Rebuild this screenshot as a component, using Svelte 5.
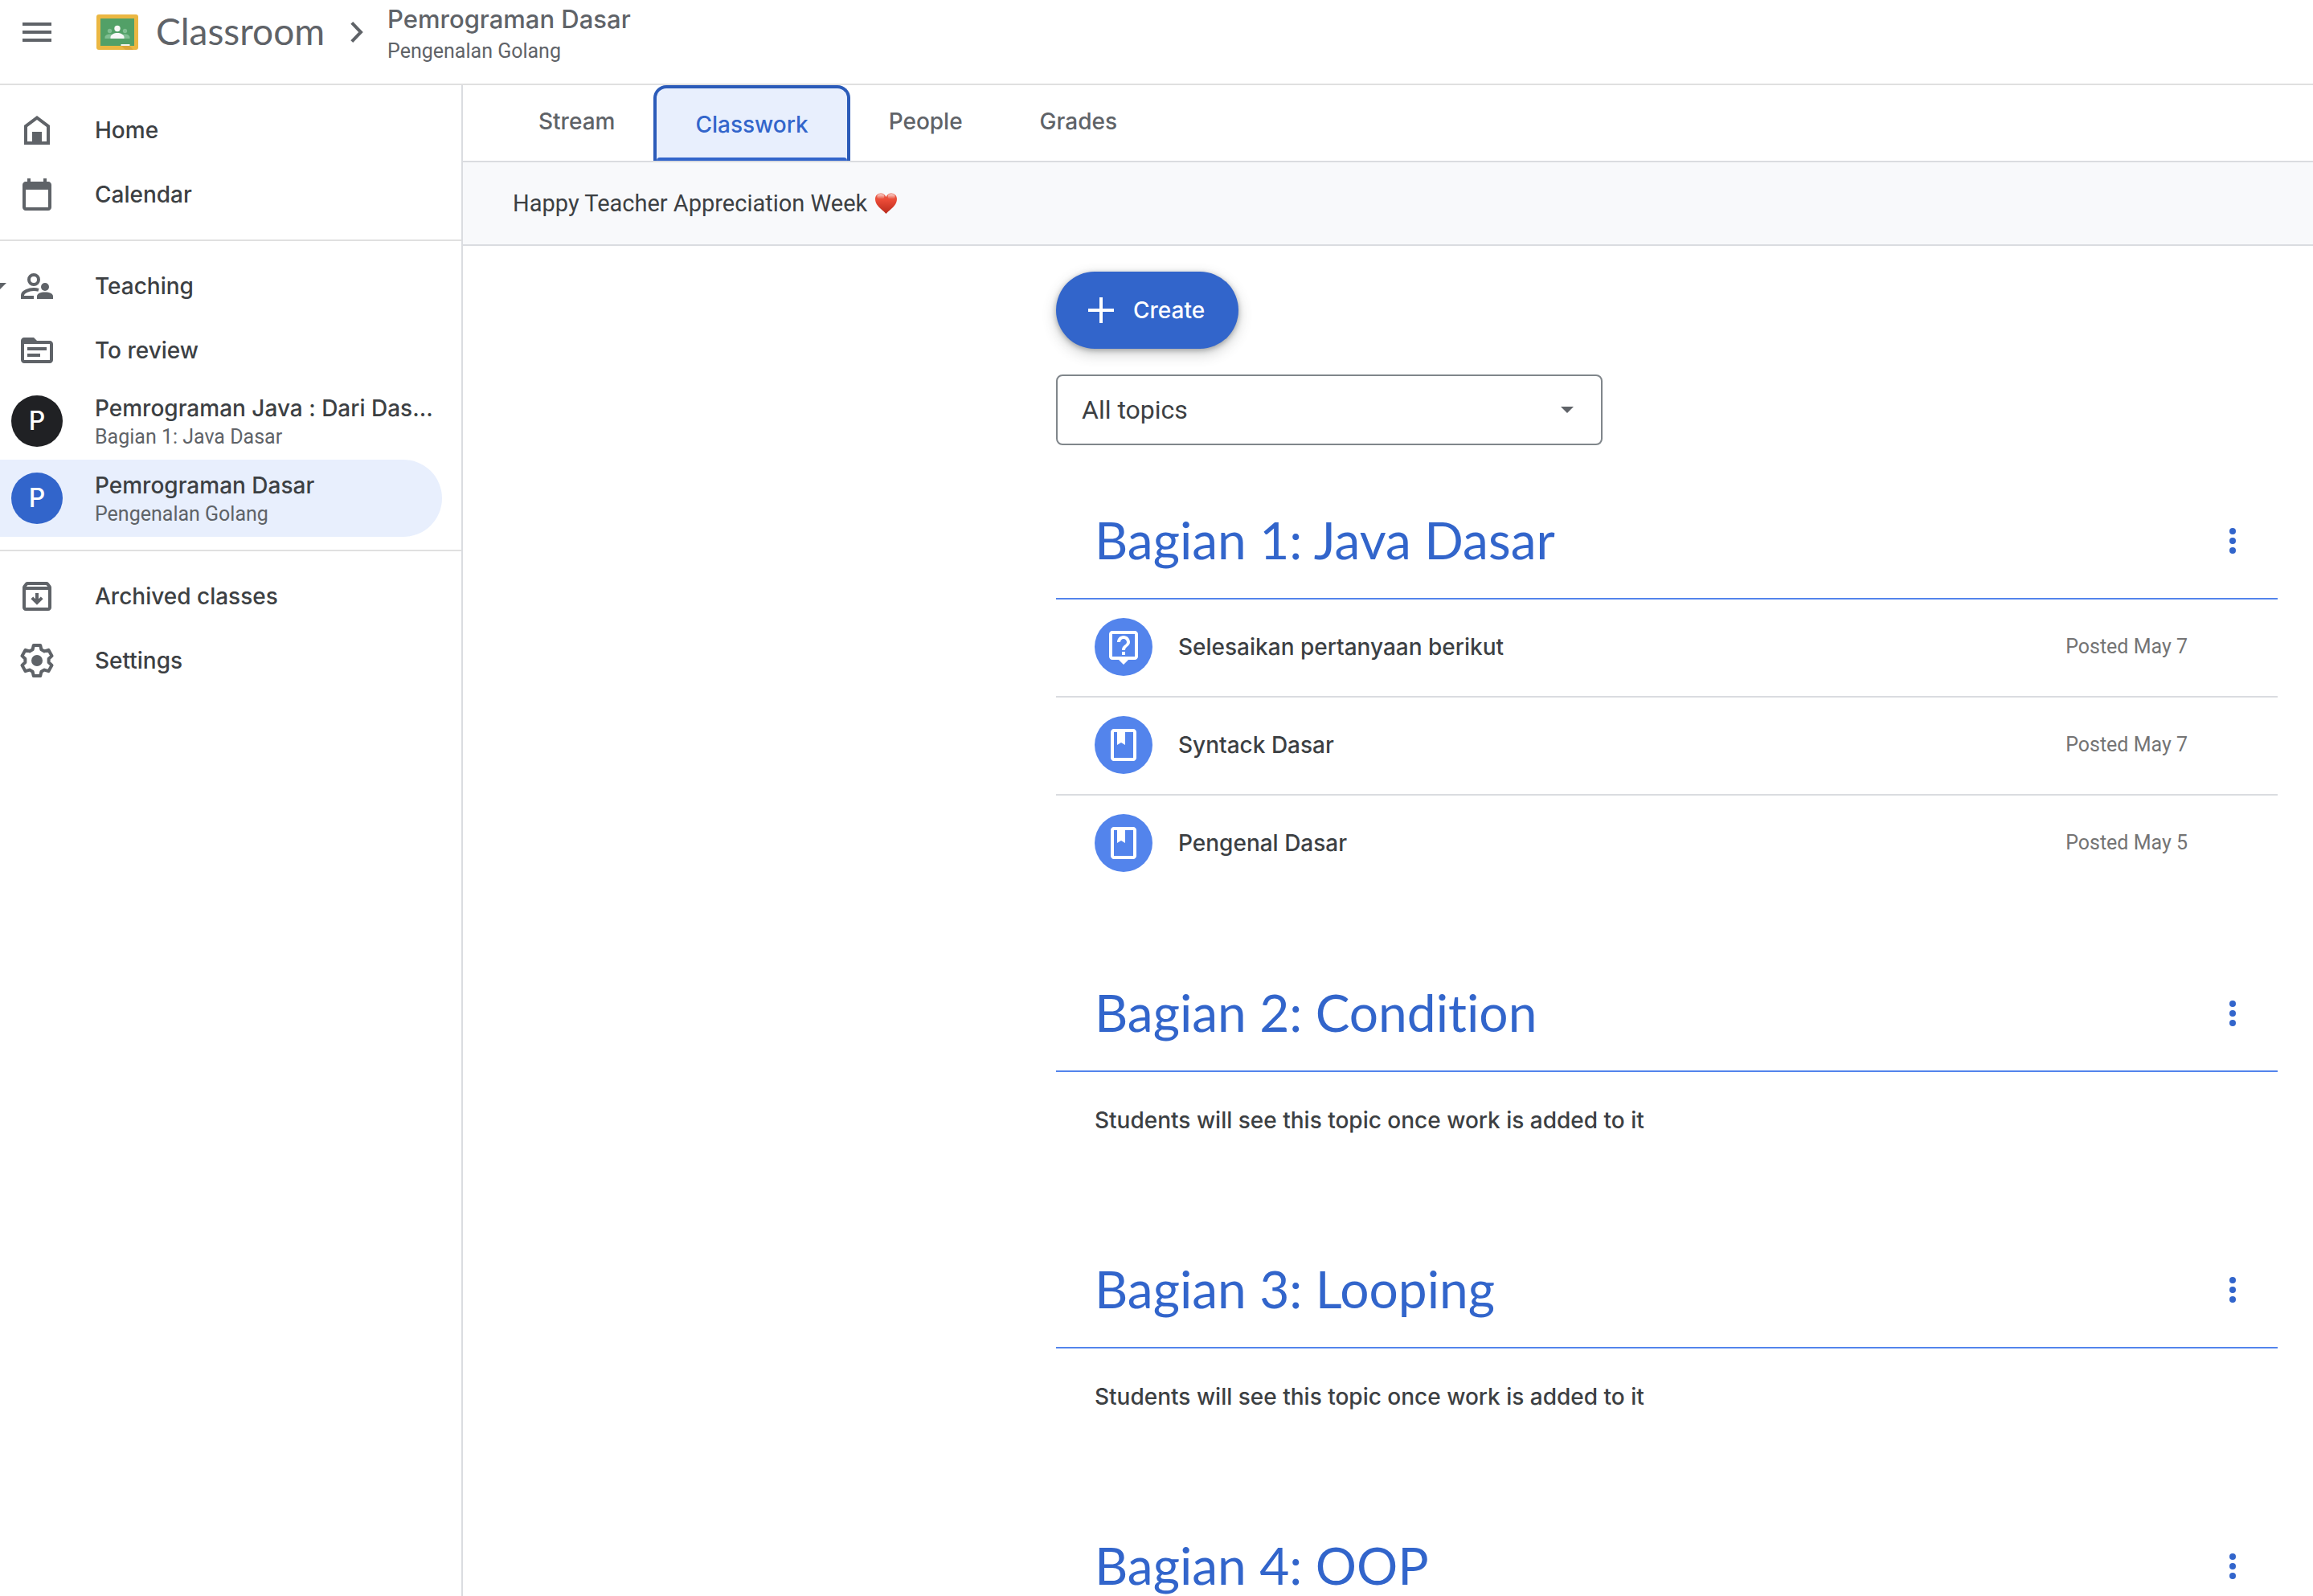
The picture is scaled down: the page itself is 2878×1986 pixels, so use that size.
<script>
  const icons = {
    home: 'M4 21V9l8-6 8 6v12H4zM6 19h3v-6h6v6h3v-9l-6-4.5L6 10v9z',
    calendar:
      'M19 4h-1V2h-2v2H8V2H6v2H5c-1.1 0-2 .9-2 2v14c0 1.1.9 2 2 2h14c1.1 0 2-.9 2-2V6c0-1.1-.9-2-2-2zm0 16H5V9h14v11z',
    review:
      'M20 6h-8l-2-2H4c-1.1 0-2 .9-2 2v12c0 1.1.9 2 2 2h16c1.1 0 2-.9 2-2V8c0-1.1-.9-2-2-2zm0 12H4V8h16v10zM6 10h12v2H6zM6 14h8v2H6z',
    archive:
      'M20.54 5.23l-1.39-1.68C18.88 3.21 18.47 3 18 3H6c-.47 0-.88.21-1.16.55L3.46 5.23C3.17 5.57 3 6.02 3 6.5V19c0 1.1.9 2 2 2h14c1.1 0 2-.9 2-2V6.5c0-.48-.17-.93-.46-1.27zM6.24 5h11.52l.83 1H5.42l.82-1zM5 19V8h14v11H5zM12 17.4l3.8-3.8-1.4-1.4-1.4 1.4V10h-2v3.6l-1.4-1.4-1.4 1.4z',
    question:
      'M19 2H5c-1.1 0-2 .9-2 2v14c0 1.1.9 2 2 2h4l3 3 3-3h4c1.1 0 2-.9 2-2V4c0-1.1-.9-2-2-2zm0 16H5V4h14v14zM11 15h2v2h-2zM12 7c1.1 0 2 .9 2 2 0 2-3 1.75-3 5h2c0-2.25 3-2.5 3-5 0-2.21-1.79-4-4-4s-4 1.79-4 4h2c0-1.1.9-2 2-2z',
    material:
      'M18 2H6c-1.1 0-2 .9-2 2v16c0 1.1.9 2 2 2h12c1.1 0 2-.9 2-2V4c0-1.1-.9-2-2-2zm0 18H6V4h2v8l2.5-1.5L13 12V4h5v16z'
  };

  // Six-toothed gear outline: one tooth profile turned by 60 degrees at a time.
  const tooth = [[-2.7, -6.9], [-2.1, -9.5], [2.1, -9.5], [2.7, -6.9]];
  const gear = Array.from({ length: 6 }, (_, i) => (i * Math.PI) / 3)
    .flatMap((a) =>
      tooth.map(([x, y]) => [
        (12 + x * Math.cos(a) - y * Math.sin(a)).toFixed(2),
        (12 + x * Math.sin(a) + y * Math.cos(a)).toFixed(2)
      ].join(' '))
    )
    .join('L');

  const tabs = ['Stream', 'Classwork', 'People', 'Grades'];
  let active = $state('Classwork');

  const classes = [
    { name: 'Pemrograman Java : Dari Das…', section: 'Bagian 1: Java Dasar', tone: 'black', current: false },
    { name: 'Pemrograman Dasar', section: 'Pengenalan Golang', tone: 'blue', current: true }
  ];

  const topics = [
    {
      title: 'Bagian 1: Java Dasar',
      work: [
        { title: 'Selesaikan pertanyaan berikut', icon: 'question', date: 'Posted May 7' },
        { title: 'Syntack Dasar', icon: 'material', date: 'Posted May 7' },
        { title: 'Pengenal Dasar', icon: 'material', date: 'Posted May 5' }
      ]
    },
    { title: 'Bagian 2: Condition', work: [] },
    { title: 'Bagian 3: Looping', work: [] },
    { title: 'Bagian 4: OOP', work: [] }
  ];
</script>

{#snippet icon(name)}
  <svg class="icon" viewBox="0 0 24 24" aria-hidden="true"><path fill-rule="evenodd" d={icons[name]} /></svg>
{/snippet}

<div class="app">
  <header>
    <button class="menu" aria-label="Main menu">
      <svg class="icon" viewBox="0 0 24 24" aria-hidden="true"><path d="M3 6h18v2H3zM3 11h18v2H3zM3 16h18v2H3z" /></svg>
    </button>
    <a class="brand" href="#home">
      <svg class="logo" viewBox="0 0 52 44" aria-hidden="true">
        <rect width="52" height="44" rx="3" fill="#ebb742" />
        <rect x="5" y="5" width="42" height="34" fill="#52a067" />
        <path d="M31 39h10l5 5H36z" fill="#dda63a" />
        <rect x="30.500" y="37" width="11" height="2" fill="#f4f4f2" />
        <g fill="#80be92">
          <circle cx="16.500" cy="20.500" r="2.700" />
          <circle cx="35.500" cy="20.500" r="2.700" />
          <path d="M10.500 30v-1.500c0-2.500 3-4 6-4s6 1.500 6 4V30zM29.500 30v-1.500c0-2.500 3-4 6-4s6 1.500 6 4V30z" />
        </g>
        <circle cx="26" cy="17.500" r="3.700" fill="#f7f7f7" />
        <path d="M17.500 30v-1.500c0-3.500 4.500-5.500 8.500-5.500s8.500 2 8.500 5.500V30z" fill="#f7f7f7" />
      </svg>
      <span>Classroom</span>
    </a>
    <svg class="icon chevron" viewBox="0 0 24 24" aria-hidden="true"><path d="M9.400 6.200L15 12l-5.600 5.800" /></svg>
    <a class="crumb" href="#class">
      <span class="crumb-title">Pemrograman Dasar</span>
      <span class="section">Pengenalan Golang</span>
    </a>
  </header>

  <div class="body">
    <nav class="sidebar" aria-label="Main">
      <div class="group">
        <a class="item" href="#home">{@render icon('home')}Home</a>
        <a class="item" href="#calendar">{@render icon('calendar')}Calendar</a>
      </div>
      <div class="group">
        <a class="item teaching" href="#teaching">
          <svg class="icon expand" viewBox="0 0 24 24" aria-hidden="true"><path d="M7 10l5 5 5-5z" /></svg>
          <svg class="icon" viewBox="0 0 24 24" aria-hidden="true">
            <g fill="none" stroke="currentColor" stroke-width="2">
              <circle cx="10" cy="8" r="3" />
              <path d="M10 19H3v-1.400C3 15.600 7 14 10 14c1 0 2 .1 3 .4" />
            </g>
            <circle cx="17" cy="12.500" r="2.500" />
            <path d="M12 20v-1.700c0-1.700 2.300-2.600 5-2.600s5 .9 5 2.600V20z" />
          </svg>
          Teaching
        </a>
        <a class="item" href="#review">{@render icon('review')}To review</a>
        {#each classes as c}
          <a class="item course" class:current={c.current} href="#course" aria-current={c.current ? 'page' : undefined}>
            <span class="avatar {c.tone}" aria-hidden="true">P</span>
            <span class="names">
              <span class="name">{c.name}</span>
              <span class="section">{c.section}</span>
            </span>
          </a>
        {/each}
      </div>
      <div class="group">
        <a class="item" href="#archived">{@render icon('archive')}Archived classes</a>
        <a class="item" href="#settings">
          <svg class="icon" viewBox="0 0 24 24" aria-hidden="true">
            <path d="M{gear}z" fill="none" stroke="currentColor" stroke-width="2" stroke-linejoin="round" />
            <circle cx="12" cy="12" r="3.500" />
          </svg>
          Settings
        </a>
      </div>
    </nav>

    <main>
      <div class="tabs" role="tablist">
        {#each tabs as t}
          <button class="tab" role="tab" aria-selected={active === t} onclick={() => (active = t)}>{t}</button>
        {/each}
      </div>

      <p class="banner">
        Happy Teacher Appreciation Week
        <svg class="heart" viewBox="0 0 27 26" role="img" aria-label="heart">
          <defs>
            <linearGradient id="heart-fill" x1="0" y1="0" x2="0" y2="1">
              <stop offset="0" stop-color="#e9604a" />
              <stop offset="0.350" stop-color="#ea4a36" />
              <stop offset="1" stop-color="#b82a1c" />
            </linearGradient>
            <linearGradient id="heart-shine" x1="0" y1="0" x2="0" y2="1">
              <stop offset="0" stop-color="#fff" stop-opacity="0.750" />
              <stop offset="1" stop-color="#fff" stop-opacity="0" />
            </linearGradient>
          </defs>
          <path d="M13.500 26C9.500 21 0 16.500 0 7.700 0 3.400 3 .4 6.900.4c3 0 5.400 1.800 6.600 4.700C14.700 2.200 17.100.4 20.100.4 24 .4 27 3.400 27 7.700 27 16.500 17.500 21 13.500 26z" fill="url(#heart-fill)" />
          <ellipse cx="6.800" cy="4.500" rx="4.500" ry="3.300" fill="url(#heart-shine)" />
          <ellipse cx="20.200" cy="4.500" rx="4.500" ry="3.300" fill="url(#heart-shine)" />
        </svg>
      </p>

      <div class="content">
        <button class="create">
          <svg viewBox="0 0 32 32" aria-hidden="true"><path d="M14 0h4v14h14v4H18v14h-4V18H0v-4h14z" /></svg>
          Create
        </button>

        <div class="filter">
          <select aria-label="Topic filter">
            <option>All topics</option>
            {#each topics as topic}<option>{topic.title}</option>{/each}
          </select>
          <svg class="arrow" viewBox="0 0 16 8" aria-hidden="true"><path d="M0 0h16L8 8z" /></svg>
        </div>

        {#each topics as topic}
          <section>
            <div class="topic">
              <h2>{topic.title}</h2>
              <button class="more" aria-label="Options for {topic.title}">
                <svg class="icon" viewBox="0 0 24 24" aria-hidden="true">
                  <circle cx="12" cy="6" r="2" /><circle cx="12" cy="12" r="2" /><circle cx="12" cy="18" r="2" />
                </svg>
              </button>
            </div>
            {#if topic.work.length}
              <ul>
                {#each topic.work as w}
                  <li>
                    <span class="badge">{@render icon(w.icon)}</span>
                    <span class="work-title">{w.title}</span>
                    <span class="date">{w.date}</span>
                  </li>
                {/each}
              </ul>
            {:else}
              <p class="empty">Students will see this topic once work is added to it</p>
            {/if}
          </section>
        {/each}
      </div>
    </main>
  </div>
</div>

<style>
  :global(body) {
    background: #fff;
  }
  * {
    box-sizing: border-box;
  }
  .app {
    display: flex;
    flex-direction: column;
    height: 100vh;
    overflow: hidden;
    color: #3c4043;
    font: 500 28px/40px Inter, sans-serif;
    font-variant-ligatures: none;
  }
  a {
    color: inherit;
    text-decoration: none;
  }
  button {
    padding: 0;
    border: 0;
    background: none;
    color: inherit;
    font: inherit;
    cursor: pointer;
  }
  .icon {
    flex: none;
    display: block;
    width: 48px;
    height: 48px;
    fill: currentColor;
  }

  header {
    flex: none;
    display: flex;
    align-items: flex-start;
    height: 106px;
    padding-left: 22px;
    border-bottom: 2px solid #e0e0e0;
    color: #5f6368;
  }
  .menu,
  .brand,
  .chevron {
    display: flex;
    align-items: center;
    height: 80px;
  }
  .brand {
    gap: 22px;
    margin-left: 50px;
    font: 400 46px/76px Lato, sans-serif;
  }
  .brand span {
    padding-bottom: 2px;
  }
  .logo {
    width: 52px;
    height: 44px;
  }
  .chevron {
    margin: 0 15px;
    fill: none;
    stroke: currentColor;
    stroke-width: 2;
  }
  .crumb {
    display: flex;
    flex-direction: column;
    padding-top: 4px;
  }
  .crumb-title {
    font-size: 31px;
  }
  .section {
    color: #5f6368;
    font: 400 25px/32px Roboto, sans-serif;
  }
  .crumb .section {
    line-height: 40px;
  }

  .body {
    flex: 1;
    display: flex;
    min-height: 0;
  }
  .sidebar {
    flex: none;
    width: 576px;
    border-right: 2px solid #dadce0;
  }
  .group {
    padding: 16px 0;
  }
  .group + .group {
    border-top: 2px solid #e0e0e0;
  }
  .item {
    display: flex;
    align-items: center;
    gap: 48px;
    height: 80px;
    margin-right: 24px;
    padding-left: 22px;
    white-space: nowrap;
  }
  .item .icon {
    color: #5f6368;
  }
  .teaching {
    position: relative;
  }
  .expand {
    position: absolute;
    left: -26px;
  }
  .course {
    gap: 40px;
    height: 96px;
    padding-left: 14px;
    border-radius: 0 48px 48px 0;
  }
  .current {
    background: #e8effd;
  }
  .avatar {
    flex: none;
    width: 64px;
    border-radius: 50%;
    color: #fff;
    font-size: 32px;
    line-height: 64px;
    text-align: center;
  }
  .black {
    background: #202124;
  }
  .blue {
    background: #3265cb;
  }
  .names {
    display: flex;
    flex-direction: column;
  }

  main {
    flex: 1;
    min-width: 0;
    overflow-y: auto;
    scrollbar-width: none;
  }
  .tabs {
    display: flex;
    height: 96px;
    padding-left: 46px;
    border-bottom: 2px solid #dadce0;
    color: #5f6368;
  }
  .tab {
    height: 94px;
    padding: 0 48px 4px;
  }
  .tab[aria-selected='true'] {
    position: relative;
    padding: 0 48px;
    border: 4px solid #2b5bb9;
    border-bottom: 0;
    border-radius: 16px 16px 0 0;
    background: #e8effd;
    color: #3265cb;
  }
  .tab[aria-selected='true']::after {
    content: '';
    position: absolute;
    inset: auto 0 0;
    height: 4px;
    border-radius: 4px 4px 0 0;
    background: #3265cb;
  }
  .banner {
    display: flex;
    align-items: center;
    gap: 10px;
    margin: 0;
    padding: 31px 62px;
    border-bottom: 2px solid #dadce0;
    background: #f8f9fb;
    font: 400 29px/40px Roboto, sans-serif;
  }
  .heart {
    width: 27px;
    height: 26px;
  }

  .content {
    max-width: 1564px;
    margin-left: auto;
    padding: 32px 44px 0 0;
  }
  .create {
    display: flex;
    align-items: center;
    gap: 24px;
    height: 96px;
    padding: 0 42px 0 40px;
    border-radius: 48px;
    background: #3265cb;
    box-shadow: 0 2px 6px rgba(60, 64, 67, 0.4), 0 6px 16px 2px rgba(60, 64, 67, 0.2);
    color: #fff;
  }
  .create svg {
    width: 32px;
    height: 32px;
    fill: currentColor;
  }
  .filter {
    display: grid;
    align-items: center;
    max-width: 680px;
    margin: 32px 0 48px;
  }
  .filter > * {
    grid-area: 1 / 1;
  }
  select {
    appearance: none;
    width: 100%;
    height: 88px;
    padding: 0 30px;
    border: 2px solid #80868b;
    border-radius: 8px;
    background: #fff;
    color: #3c4043;
    font: 400 32px/40px Roboto, sans-serif;
  }
  .arrow {
    justify-self: end;
    width: 16px;
    height: 8px;
    margin-right: 36px;
    fill: #5f6368;
    pointer-events: none;
  }

  section {
    margin-bottom: 80px;
  }
  .topic {
    display: flex;
    align-items: center;
    justify-content: space-between;
    height: 144px;
    padding: 0 32px 0 48px;
    border-bottom: 2px solid #5384ec;
    color: #3265cb;
  }
  h2 {
    margin: 0;
    padding-bottom: 2px;
    font: 400 64px/80px Lato, sans-serif;
    font-variant-ligatures: none;
  }
  ul {
    margin: 0;
    padding: 0;
    list-style: none;
  }
  li {
    display: flex;
    align-items: center;
    gap: 32px;
    height: 120px;
    padding: 0 112px 2px 48px;
  }
  li + li {
    height: 122px;
    border-top: 2px solid #dadce0;
  }
  .badge {
    display: grid;
    place-items: center;
    width: 72px;
    height: 72px;
    border-radius: 50%;
    background: #5384ec;
    color: #fff;
  }
  .work-title {
    flex: 1;
  }
  .date {
    color: #747474;
    font: 400 25px/32px Roboto, sans-serif;
  }
  .empty {
    margin: 0;
    padding: 40px 48px;
  }
</style>
